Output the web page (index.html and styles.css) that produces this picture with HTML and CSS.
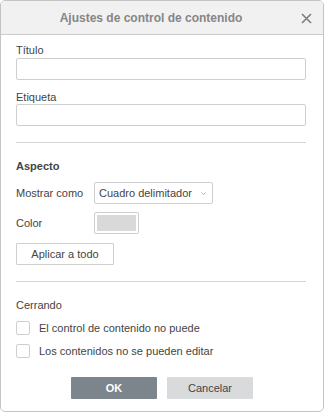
FILE: index.html
```html
<!DOCTYPE html>
<html lang="es">
<head>
    <meta charset="UTF-8">
    <meta name="viewport" content="width=device-width, initial-scale=1.0">
    <title>Ajustes de control de contenido</title>
    <link rel="stylesheet" href="styles.css">
</head>
<body>
    <div class="dialog">
        <div class="header">
            <span class="title">Ajustes de control de contenido</span>
            <span class="close">
                <svg width="11" height="11" viewBox="0 0 11 11"><path d="M1 1 L10 10 M10 1 L1 10" stroke="#7d7d7d" stroke-width="1.6" fill="none"/></svg>
            </span>
        </div>
        <div class="content">
            <div class="label">Título</div>
            <div class="input"></div>
            <div class="label second">Etiqueta</div>
            <div class="input"></div>

            <div class="separator"></div>

            <div class="section bold">Aspecto</div>
            <div class="row">
                <span class="row-label">Mostrar como</span>
                <div class="select">
                    <span>Cuadro delimitador</span>
                    <svg width="5" height="3" viewBox="0 0 5 3"><path d="M0.5 0.5 L2.5 2.5 L4.5 0.5" stroke="#9a9a9a" stroke-width="0.8" fill="none"/></svg>
                </div>
            </div>
            <div class="row color-row">
                <span class="row-label">Color</span>
                <div class="color-btn"><div class="swatch"></div></div>
            </div>
            <div class="btn apply">Aplicar a todo</div>

            <div class="separator"></div>

            <div class="section">Cerrando</div>
            <div class="check"><span class="box"></span>El control de contenido no puede</div>
            <div class="check"><span class="box"></span>Los contenidos no se pueden editar</div>

            <div class="footer">
                <div class="btn primary">OK</div>
                <div class="btn secondary">Cancelar</div>
            </div>
        </div>
    </div>
</body>
</html>
```

FILE: styles.css
```css
body {
    margin: 0;
    font-family: "Liberation Sans", Arial, sans-serif;
    font-size: 11px;
    color: #444444;
    background: #ffffff;
}

.dialog {
    width: 324px;
    height: 412px;
    box-sizing: border-box;
    border: 1px solid #c4c4c4;
    border-radius: 5px;
    overflow: hidden;
}

.header {
    height: 33px;
    background-color: #f1f1f1;
    border-bottom: 1px solid #cbcbcb;
    display: flex;
    align-items: center;
    position: relative;
}

.title {
    flex: 1;
    text-align: center;
    padding-right: 22px;
    font-size: 12px;
    font-weight: bold;
    color: #868686;
}

.close {
    position: absolute;
    right: 11px;
    top: 12px;
    width: 11px;
    height: 11px;
    display: flex;
}

.content {
    padding: 9px 17px 0 15px;
}

.label {
    line-height: 13px;
    margin-bottom: 1px;
}

.label.second {
    margin-top: 11px;
    margin-bottom: 0;
}

.input {
    height: 20px;
    border: 1px solid #cfcfcf;
    border-radius: 2px;
}

.separator {
    height: 1px;
    background-color: #d5d5d5;
    margin-top: 16px;
}

.section {
    margin-top: 17px;
    line-height: 13px;
}

.bold {
    font-weight: bold;
}

.row {
    display: flex;
    align-items: center;
    margin-top: 9px;
}

.row-label {
    width: 78px;
}

.select {
    width: 107px;
    height: 20px;
    border: 1px solid #cfcfcf;
    border-radius: 2px;
    display: flex;
    align-items: center;
    justify-content: space-between;
    padding: 0 6px 0 4px;
}

.color-row {
    margin-top: 8px;
}

.color-btn {
    width: 43px;
    height: 20px;
    border: 1px solid #cfcfcf;
    border-radius: 2px;
    display: flex;
    align-items: center;
    justify-content: center;
}

.swatch {
    width: 39px;
    height: 16px;
    background-color: #d9d9d9;
}

.btn {
    height: 22px;
    box-sizing: border-box;
    display: flex;
    align-items: center;
    justify-content: center;
    border-radius: 1px;
}

.apply {
    width: 98px;
    margin-top: 9px;
    border: 1px solid #cfcfcf;
}

.check {
    display: flex;
    align-items: center;
    margin-top: 9px;
    line-height: 14px;
}

.box {
    width: 12px;
    height: 12px;
    border: 1px solid #cfcfcf;
    border-radius: 2px;
    margin-right: 9px;
}

.footer {
    display: flex;
    justify-content: center;
    gap: 10px;
    margin-top: 19px;
    padding-left: 2px;
}

.primary {
    width: 86px;
    background-color: #7d858c;
    color: #ffffff;
    font-weight: bold;
}

.secondary {
    width: 86px;
    background-color: #d8dadc;
    color: #444444;
}
```
